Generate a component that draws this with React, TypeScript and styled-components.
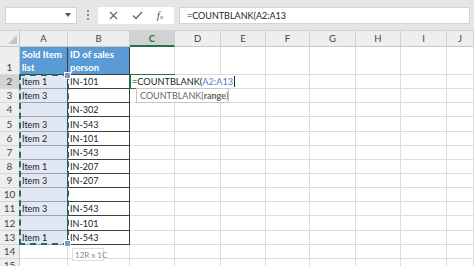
import React from "react";
import styled, { createGlobalStyle, css } from "styled-components";

const Global = createGlobalStyle`
  html, body { margin: 0; padding: 0; background: #fff; overflow: hidden; }
  body { font-family: Lato, "Liberation Sans", sans-serif; }
`;

const Page = styled.div`
  width: 474px;
  height: 266px;
  overflow: hidden;
  display: flex;
  flex-direction: column;
`;

const Toolbar = styled.div`
  height: 31px;
  flex: none;
  background: #e6e6e6;
  border-bottom: 1px solid #d2d2d2;
  box-sizing: border-box;
  display: flex;
  align-items: center;
  padding: 0 4px 0 5px;
`;

const NameBox = styled.div`
  width: 72px;
  height: 17px;
  background: #fff;
  border: 1px solid #d4d4d4;
  box-sizing: border-box;
  display: flex;
  align-items: center;
  justify-content: flex-end;
  padding-right: 5px;
`;

const Dots = styled.div`
  width: 21px;
  display: flex;
  flex-direction: column;
  align-items: center;
  gap: 2px;
  span { width: 2px; height: 2px; background: #8a8a8a; display: block; }
`;

const IconBox = styled.div`
  width: 76px;
  height: 17px;
  background: #fff;
  display: flex;
  align-items: center;
  justify-content: space-around;
  padding: 0 4px;
  box-sizing: border-box;
`;

const Fx = styled.span`
  font-family: "Liberation Serif", serif;
  font-style: italic;
  font-size: 11px;
  color: #555;
  sub { font-size: 7px; vertical-align: baseline; }
`;

const FormulaInput = styled.div`
  margin-left: 5px;
  flex: 1;
  height: 17px;
  background: #fff;
  border: 1px solid #d4d4d4;
  box-sizing: border-box;
  display: flex;
  align-items: center;
  padding-left: 7px;
  font-size: 9px;
  color: #222;
`;

const Sheet = styled.div`
  display: grid;
  grid-template-columns: 20px 48px 62px 45px 46px 45px 44px 46px 45px 46px 1fr;
  grid-template-rows: 16px 28px repeat(14, 14.15px);
  position: relative;
  font-size: 9px;
  color: #222;
`;

const Placed = css<{ $r: number; $c: number }>`
  grid-row: ${(p) => p.$r};
  grid-column: ${(p) => p.$c};
`;

const Corner = styled.div<{ $r: number; $c: number }>`
  ${Placed}
  background: #eeeeee;
  border-right: 1px solid #c8c8c8;
  border-bottom: 1px solid #c8c8c8;
  box-sizing: border-box;
  display: flex;
  align-items: flex-end;
  justify-content: flex-end;
  padding: 0 2px 2px 0;
`;

const ColHeader = styled.div<{ $r: number; $c: number; $active?: boolean }>`
  ${Placed}
  background: ${(p) => (p.$active ? "#d2d2d2" : "#eeeeee")};
  border-right: 1px solid #d0d0d0;
  border-bottom: ${(p) => (p.$active ? "2px solid #217346" : "1px solid #c8c8c8")};
  box-sizing: border-box;
  display: flex;
  align-items: center;
  justify-content: center;
  font-size: 9.5px;
  color: ${(p) => (p.$active ? "#217346" : "#444")};
  font-weight: ${(p) => (p.$active ? 700 : 400)};
`;

const RowHeader = styled.div<{ $r: number; $c: number; $active?: boolean }>`
  ${Placed}
  background: ${(p) => (p.$active ? "#d2d2d2" : "#eeeeee")};
  border-right: 1px solid #c8c8c8;
  border-bottom: 1px solid #d8d8d8;
  box-sizing: border-box;
  display: flex;
  align-items: flex-end;
  justify-content: center;
  font-size: 10px;
  line-height: 13px;
  color: #444;
`;

type Kind = "plain" | "head" | "selA" | "tableB";

const Cell = styled.div<{ $r: number; $c: number; $kind: Kind }>`
  ${Placed}
  box-sizing: border-box;
  border-right: 1px solid #dcdcdc;
  border-bottom: 1px solid #dcdcdc;
  white-space: nowrap;
  overflow: hidden;
  padding-left: 2px;
  display: flex;
  align-items: flex-end;
  line-height: 13px;
  ${(p) =>
    p.$kind === "head" &&
    css`
      background: #5b9bd5;
      color: #fff;
      font-weight: 700;
      font-size: 9.5px;
      white-space: normal;
      border-right: 1px solid #3e3e3e;
      border-bottom: 1px solid #3e3e3e;
    `}
  ${(p) =>
    p.$kind === "selA" &&
    css`
      background: #e2e8f3;
      border-right: 1px solid #3e3e3e;
      border-bottom: 1px solid #9aa2ad;
    `}
  ${(p) =>
    p.$kind === "tableB" &&
    css`
      border-right: 1px solid #3e3e3e;
      border-bottom: 1px solid #3e3e3e;
    `}
`;

const Marquee = styled.div`
  grid-column: 2;
  grid-row: 3 / 15;
  margin: -1px -1px 0 -1px;
  border: 2px dashed #1f6e5d;
  pointer-events: none;
  position: relative;
  z-index: 1;
`;

const Handle = styled.span<{ $bottom?: boolean }>`
  position: absolute;
  right: -4px;
  ${(p) => (p.$bottom ? "bottom: -4px;" : "top: -4px;")}
  width: 5px;
  height: 5px;
  background: #7f97c9;
  border: 1px solid #fff;
`;

const ActiveCell = styled.div`
  grid-column: 4;
  grid-row: 3;
  border: 2px solid #217346;
  border-right: none;
  margin: -1px 0 0 -1px;
  position: relative;
  z-index: 2;
`;

const EditText = styled.div`
  position: absolute;
  left: 0px;
  top: -1px;
  height: 13px;
  display: flex;
  align-items: center;
  white-space: nowrap;
  background: #fff;
  font-size: 9.2px;
  color: #222;
  padding: 0 1px;
`;

const Ref = styled.span`
  color: #4a7ec6;
`;

const Caret = styled.span`
  display: inline-block;
  width: 1px;
  height: 11px;
  background: #222;
  margin-left: 1px;
`;

const Tip = styled.div<{ $x: number; $y: number; $w: number; $small?: boolean }>`
  position: absolute;
  left: ${(p) => p.$x}px;
  top: ${(p) => p.$y}px;
  width: ${(p) => p.$w}px;
  height: ${(p) => (p.$small ? 13 : 15)}px;
  box-sizing: border-box;
  background: #fff;
  border: 1px solid ${(p) => (p.$small ? "#dcdcdc" : "#c6c6c6")};
  color: ${(p) => (p.$small ? "#8a8a8a" : "#666")};
  font-size: ${(p) => (p.$small ? 8 : 9)}px;
  display: flex;
  align-items: center;
  padding-left: ${(p) => (p.$small ? 2 : 3)}px;
  white-space: nowrap;
  z-index: 3;
  b { font-weight: 700; }
`;

const Tri = styled.svg`
  display: block;
`;

const cols = ["A", "B", "C", "D", "E", "F", "G", "H", "I", "J"];

const data: [string, string][] = [
  ["Item 1", "IN-101"],
  ["Item 3", ""],
  ["", "IN-302"],
  ["Item 3", "IN-543"],
  ["Item 2", "IN-101"],
  ["", "IN-543"],
  ["Item 1", "IN-207"],
  ["Item 3", "IN-207"],
  ["", ""],
  ["Item 3", "IN-543"],
  ["", "IN-101"],
  ["Item 1", "IN-543"],
];

export default function App() {
  const cells: React.ReactNode[] = [];
  for (let r = 1; r <= 15; r++) {
    cells.push(
      <RowHeader key={`rh${r}`} $r={r + 1} $c={1} $active={r === 2}>
        {r}
      </RowHeader>
    );
    cols.forEach((_, ci) => {
      let kind: Kind = "plain";
      let text = "";
      if (r === 1 && ci < 2) {
        kind = "head";
        text = ci === 0 ? "Sold Item list" : "ID of sales person";
      } else if (r >= 2 && r <= 13 && ci === 0) {
        kind = "selA";
        text = data[r - 2][0];
      } else if (r >= 2 && r <= 13 && ci === 1) {
        kind = "tableB";
        text = data[r - 2][1];
      }
      cells.push(
        <Cell key={`c${r}-${ci}`} $r={r + 1} $c={ci + 2} $kind={kind}>
          {kind === "head" ? <span>{text}</span> : text}
        </Cell>
      );
    });
  }

  return (
    <Page>
      <Global />
      <Toolbar>
        <NameBox>
          <Tri width="6" height="4" viewBox="0 0 6 4">
            <path d="M0 0 L6 0 L3 4 Z" fill="#555" />
          </Tri>
        </NameBox>
        <Dots>
          <span />
          <span />
          <span />
        </Dots>
        <IconBox>
          <svg width="9" height="9" viewBox="0 0 9 9">
            <path d="M1 1 L8 8 M8 1 L1 8" stroke="#666" strokeWidth="1.2" />
          </svg>
          <svg width="11" height="9" viewBox="0 0 11 9">
            <path d="M1 4.5 L4 7.5 L10 1" stroke="#666" strokeWidth="1.4" fill="none" />
          </svg>
          <Fx>
            f<sub>x</sub>
          </Fx>
        </IconBox>
        <FormulaInput>=COUNTBLANK(A2:A13</FormulaInput>
      </Toolbar>
      <Sheet>
        <Corner $r={1} $c={1}>
          <Tri width="9" height="9" viewBox="0 0 9 9">
            <path d="M9 0 L9 9 L0 9 Z" fill="#c4c4c4" />
          </Tri>
        </Corner>
        {cols.map((c, i) => (
          <ColHeader key={`h${i}`} $r={1} $c={i + 2} $active={c === "C"}>
            {c}
          </ColHeader>
        ))}
        {cells}
        <Marquee>
          <Handle />
          <Handle $bottom />
        </Marquee>
        <ActiveCell>
          <EditText>
            =COUNTBLANK(<Ref>A2:A13</Ref>
            <Caret />
          </EditText>
        </ActiveCell>
        <Tip $x={136} $y={57} $w={93}>
          COUNTBLANK(<b>range</b>)
        </Tip>
        <Tip $x={72} $y={217} $w={32} $small>
          12R x 1C
        </Tip>
      </Sheet>
    </Page>
  );
}
